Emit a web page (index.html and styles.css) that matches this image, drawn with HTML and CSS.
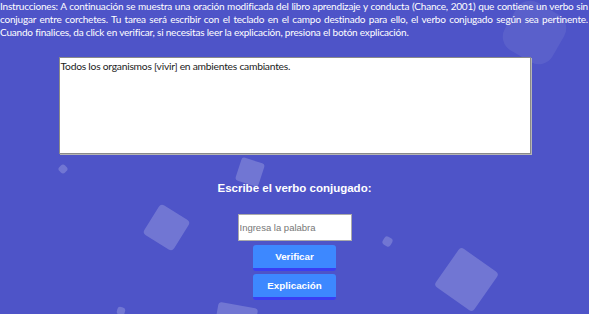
FILE: index.html
```html
<!DOCTYPE html>
<html lang="es">
<head>
  <meta charset="UTF-8">
  <meta name="viewport" content="width=device-width, initial-scale=1.0">
  <title>Verbo conjugado</title>
  <link rel="stylesheet" href="styles.css">
</head>
<body>
  <ul class="squares">
    <li class="sq sq-1"></li>
    <li class="sq sq-2"></li>
    <li class="sq sq-3"></li>
    <li class="sq sq-4"></li>
    <li class="sq sq-5"></li>
    <li class="sq sq-6"></li>
    <li class="sq sq-7"></li>
    <li class="sq sq-8"></li>
  </ul>

  <main class="page">
    <p class="instructions">Instrucciones: A continuación se muestra una oración modificada del libro aprendizaje y conducta (Chance, 2001) que contiene un verbo sin conjugar entre corchetes. Tu tarea será escribir con el teclado en el campo destinado para ello, el verbo conjugado según sea pertinente. Cuando finalices, da click en verificar, si necesitas leer la explicación, presiona el botón explicación.</p>

    <div class="sentence">Todos los organismos [vivir] en ambientes cambiantes.</div>

    <div class="answer">
      <h2>Escribe el verbo conjugado:</h2>
      <input id="verbInput" type="text" placeholder="Ingresa la palabra">
      <button class="button" onclick="verificar()">Verificar</button>
      <button class="button" onclick="explicar()">Explicación</button>
    </div>
  </main>

  <script>
    function verificar() {
      const word = document.getElementById('verbInput').value.trim().toLowerCase();
      alert(word === 'viven' ? '¡Correcto!' : 'Intenta de nuevo');
    }

    function explicar() {
      alert('El sujeto "todos los organismos" es plural, por eso el verbo se conjuga como "viven".');
    }
  </script>
</body>
</html>
```

FILE: styles.css
```css
body {
  background-color: #4e54c8;
  margin: 0;
  height: 100vh;
  overflow: hidden;
  font-family: 'Lato', 'Open Sans', sans-serif;
}

.squares {
  position: absolute;
  top: 0;
  left: 0;
  width: 100%;
  height: 100%;
  margin: 0;
  padding: 0;
  overflow: hidden;
  list-style: none;
}

.sq {
  position: absolute;
  background-color: rgba(255, 255, 255, 0.2);
  border-radius: 3px;
}

.sq-1 { left: 59px; top: 165px; width: 8px; height: 8px; transform: rotate(45deg); }
.sq-2 { left: 149px; top: 210px; width: 35px; height: 35px; transform: rotate(32deg); border-radius: 4px; }
.sq-3 { left: 117px; top: 307px; width: 8px; height: 8px; transform: rotate(15deg); }
.sq-4 { left: 238px; top: 160px; width: 24px; height: 24px; transform: rotate(18deg); }
.sq-5 { left: 383px; top: 237px; width: 9px; height: 9px; transform: rotate(30deg); }
.sq-6 { left: 215px; top: 305px; width: 40px; height: 40px; transform: rotate(10deg); }
.sq-7 { left: 443px; top: 256px; width: 47px; height: 47px; transform: rotate(35deg); border-radius: 4px; }
.sq-8 { left: 507px; top: 5px; width: 55px; height: 55px; transform: rotate(30deg); border-radius: 16px; background-color: rgba(255, 255, 255, 0.07); }

.page {
  position: relative;
}

.instructions {
  margin: 0;
  padding: 0 1px 0 0;
  color: white;
  font-size: 10px;
  line-height: 13px;
  letter-spacing: -0.2px;
  text-align: justify;
}

.sentence {
  width: 472px;
  height: 97px;
  margin: 18px auto 0;
  background-color: white;
  border: 1px solid #8a8a8a;
  box-shadow: 1px 1px 0 #b5b5b5;
  color: #222;
  font-size: 10.3px;
  letter-spacing: -0.25px;
  line-height: 16px;
  padding: 0 1px;
  box-sizing: border-box;
}

.answer {
  display: flex;
  flex-direction: column;
  align-items: center;
}

.answer h2 {
  margin: 27px 0 0;
  color: white;
  font-family: 'Liberation Sans', Arial, sans-serif;
  font-size: 11.5px;
  line-height: 14px;
}

input {
  width: 114px;
  height: 27px;
  margin-top: 19px;
  padding: 0 1px;
  box-sizing: border-box;
  border: 1px solid #aaa;
  font-family: 'Liberation Sans', Arial, sans-serif;
  font-size: 9.5px;
}

input::placeholder {
  color: #777;
}

.button {
  width: 83px;
  height: 26px;
  margin-top: 4px;
  border: none;
  border-bottom: 3px solid #3a3ef2;
  border-radius: 3px;
  background-color: #3d88ff;
  color: white;
  cursor: pointer;
  font-family: 'Liberation Sans', Arial, sans-serif;
  font-size: 9.8px;
  font-weight: bold;
}

.button + .button {
  margin-top: 3px;
}
```
